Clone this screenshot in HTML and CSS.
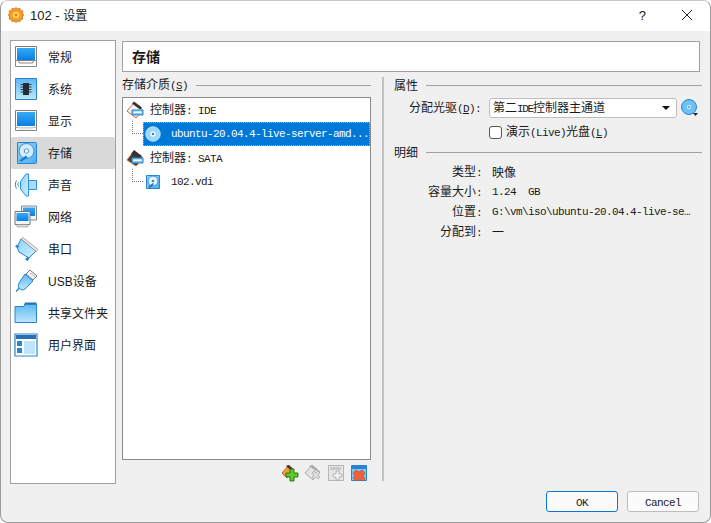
FILE: index.html
```html
<!DOCTYPE html>
<html lang="zh">
<head>
<meta charset="utf-8">
<title>102 - 设置</title>
<link rel="stylesheet" href="styles.css">
</head>
<body>
<svg class="defs" width="0" height="0"><defs>
  <linearGradient id="screen" x1="0" y1="0" x2="0" y2="1"><stop offset="0" stop-color="#35a9f6"/><stop offset="1" stop-color="#0a7fe6"/></linearGradient>
  <linearGradient id="pale" x1="0" y1="0" x2="0" y2="1"><stop offset="0" stop-color="#5cb9f3"/><stop offset="1" stop-color="#bfe7fc"/></linearGradient>
  <linearGradient id="paler" x1="0" y1="0" x2="1" y2="1"><stop offset="0" stop-color="#8ed3f9"/><stop offset="1" stop-color="#d2effd"/></linearGradient>
  <linearGradient id="hdd" x1="0" y1="0" x2="1" y2="1"><stop offset="0" stop-color="#9ad7f9"/><stop offset="1" stop-color="#4aaef0"/></linearGradient>
</defs></svg>
<div class="window">
  <header class="titlebar">
    <svg class="app-icon" width="16" height="16" viewBox="0 0 16 16"><path d="M8 0.500l1.700 1.300 2.100-.5 1 1.900 2 .8-.3 2.100 1.200 1.900-1.200 1.900.3 2.100-2 .8-1 1.900-2.100-.5L8 15.500l-1.700-1.300-2.100.5-1-1.900-2-.8.3-2.100L.3 8l1.200-1.900-.3-2.100 2-.8 1-1.900 2.100.5z" fill="#f59a23" stroke="#c9561a" stroke-width=".6"/><circle cx="8" cy="8" r="3.400" fill="#fbd15b"/><circle cx="8" cy="8" r="1.300" fill="#e9791f"/></svg>
    <span class="title-text"><span class="title-lat">102 - </span>设置</span>
    <span class="title-btn help">?</span>
    <svg class="title-close" width="12" height="12" viewBox="0 0 12 12"><path d="M1 1l10 10M11 1L1 11" stroke="#222" stroke-width="1" fill="none"/></svg>
  </header>
  <div class="main">
    <nav class="sidebar">
      <div class="nav-item"><svg class="nav-icon" viewBox="0 0 24 24"><path d="M1.500 1.500h21v14h-21z" fill="#fff" stroke="#7d7d7d"/><path d="M3 3h18v12H3z" fill="url(#screen)"/><path d="M1.500 15.500v6h21v-6h-3l-.7 2.500H5.200l-.7-2.500z" fill="#fff" stroke="#8a8a8a"/></svg><span>常规</span></div>
      <div class="nav-item"><svg class="nav-icon" viewBox="0 0 24 24"><path d="M1.500 1.500h21v21h-21z" fill="url(#pale)" stroke="#2a83cf"/><path d="M9 6h6v12H9z" fill="#262c33"/><path d="M6.500 7.500H9M6.500 10H9M6.500 12.500H9M6.500 15H9M15 7.500h2.500M15 10h2.500M15 12.500h2.500M15 15h2.500" stroke="#39424c" stroke-width="1"/></svg><span>系统</span></div>
      <div class="nav-item"><svg class="nav-icon" viewBox="0 0 24 24"><path d="M1.500 1.500h21v17h-21z" fill="#fff" stroke="#7d7d7d"/><path d="M3 3h18v14H3z" fill="url(#screen)"/><path d="M1.500 18.500v3h21v-3" fill="#fff" stroke="#8a8a8a"/><path d="M5 18.500h14v2H5z" fill="#e4e4e4"/></svg><span>显示</span></div>
      <div class="nav-item active"><svg class="nav-icon" viewBox="0 0 24 24"><path d="M3.500 1.500h18a1 1 0 0 1 1 1v19a1 1 0 0 1-1 1h-18z" fill="url(#hdd)" stroke="#2a83cf"/><circle cx="12.500" cy="10" r="7.500" fill="#d3edfc" stroke="#2f8fdc"/><circle cx="12.500" cy="10" r="2.200" fill="#fff" stroke="#3f9be0"/><path d="M5 19.500l7-5 1.800 2-6.800 4.500z" fill="#1f7fd0"/></svg><span>存储</span></div>
      <div class="nav-item"><svg class="nav-icon" viewBox="0 0 24 24"><path d="M2.500 7.500C1 10 1 13 2.500 15.500M4.500 9.500c-.7 1.200-.7 2.800 0 4" stroke="#2f7fc8" stroke-width="1" fill="none"/><path d="M6.500 8.500L12 1h2.500v22H12l-5.500-7z" fill="url(#paler)" stroke="#2f8fdc"/><path d="M14.500 7.500h8v9h-8z" fill="#a9dcfa" stroke="#2f8fdc"/></svg><span>声音</span></div>
      <div class="nav-item"><svg class="nav-icon" viewBox="0 0 24 24"><path d="M7.500 1h15v14h-15z" fill="#f4f4f4" stroke="#888"/><path d="M9 2.500h12V11H9z" fill="url(#screen)"/><path d="M1 6.500h15v13H1z" fill="#f4f4f4" stroke="#777"/><path d="M2.500 8h12v8h-12z" fill="url(#screen)"/><path d="M3 19.500h11v2.500H3z" fill="#d8d8d8" stroke="#888" stroke-width=".5"/></svg><span>网络</span></div>
      <div class="nav-item"><svg class="nav-icon" viewBox="0 0 24 24"><path d="M7 2l15 12-7 7-10-6-2-5z" fill="url(#paler)" stroke="#2a83cf"/><path d="M9 .5l15 12-1.800 2L7 2z" fill="#eaeaea" stroke="#8a8a8a" stroke-width=".7"/><path d="M1 9.500l2.500 1.500 2-1.500-2.500-2zM11 22l2 2 2.500-2-1.500-2.500z" fill="#2a83cf"/></svg><span>串口</span></div>
      <div class="nav-item"><svg class="nav-icon" viewBox="0 0 24 24"><path d="M16 1l7 6-4 4-7-6z" fill="#f4f4f4" stroke="#777"/><path d="M17 4.500l1 1M19.500 6.500l1 1" stroke="#555"/><path d="M11 5l8 7-8 8c-2 1.500-4 1-5.500-.5S4 16 5 14z" fill="url(#pale)" stroke="#2a83cf"/><path d="M5.500 19l-3.500 3.500" stroke="#2a83cf" stroke-width="1.500"/></svg><span><span class="lat-sans">USB</span>设备</span></div>
      <div class="nav-item"><svg class="nav-icon" viewBox="0 0 24 24"><path d="M11 1.500h11.500v5H9z" fill="#2a6fb5"/><path d="M1 5.500h8.500l2-2h11v18H1z" fill="url(#pale)" stroke="#2a83cf"/></svg><span>共享文件夹</span></div>
      <div class="nav-item"><svg class="nav-icon" viewBox="0 0 24 24"><path d="M1 1h22v22H1z" fill="#fff" stroke="#2a83cf" stroke-width="1.200"/><path d="M2 2h20v4H2z" fill="#2a6fb5"/><path d="M3 8h5v5H3zM3 15h5v5H3z" fill="#2a83cf"/><path d="M10 8h11v13H10z" fill="#bde6fb"/></svg><span>用户界面</span></div>
    </nav>
    <section class="content">
      <h1 class="page-title">存储</h1>
      <div class="panes">
        <div class="left-pane">
          <div class="group-label"><span>存储介质<span class="lat">(<u>S</u>)</span></span></div>
          <div class="tree">
            <div class="tree-row">
              <svg class="row-icon" viewBox="0 0 18 18"><path d="M1 10l7-8 9 7-7 8z" fill="#f2f2f2" stroke="#d9662a"/><path d="M6 2.500l2-2 8 6-2 2z" fill="#333"/><path d="M6 9h11v5H6z" fill="#7cc8f7" stroke="#2a83cf"/><path d="M7.500 10.500h8v1.500h-8z" fill="#fff"/></svg>
              <span>控制器<span class="lat">: IDE</span></span>
            </div>
            <div class="tree-row child selected">
              <span class="branch"></span>
              <div class="sel-box">
                <svg class="row-icon" viewBox="0 0 16 16"><circle cx="8" cy="8" r="7.300" fill="#9bd8fa" stroke="#c9ebfd" stroke-width=".8"/><circle cx="8" cy="8" r="2.600" fill="#fff"/><circle cx="8" cy="8" r="1.300" fill="#2a83cf"/></svg>
                <span class="lat">ubuntu-20.04.4-live-server-amd...</span>
              </div>
            </div>
            <div class="tree-row">
              <svg class="row-icon" viewBox="0 0 18 18"><path d="M1 11l7-9 9 7-7 8z" fill="#3d3d3d" stroke="#d9662a"/><path d="M5 5l3-4 8 6-3 2z" fill="#333"/><path d="M6 9h11v5H6z" fill="#7cc8f7" stroke="#2a83cf"/><path d="M7.500 10.500h8v1.500h-8z" fill="#fff"/></svg>
              <span>控制器<span class="lat">: SATA</span></span>
            </div>
            <div class="tree-row child">
              <span class="branch"></span>
              <div class="plain-box">
                <svg class="row-icon" viewBox="0 0 16 16"><path d="M1.500 1.500h13v13h-13z" fill="url(#hdd)" stroke="#2a83cf"/><circle cx="8" cy="7" r="5" fill="#e3f4fe" stroke="#3a8fd6"/><circle cx="8" cy="7" r="1.300" fill="#3a8fd6"/><path d="M3 13l5-4 1 1-4 4z" fill="#2a6fb5"/></svg>
                <span class="lat">102.vdi</span>
              </div>
            </div>
          </div>
          <div class="tree-tools">
            <svg class="tool" viewBox="0 0 18 18"><path d="M1 9l7-8 4 4-6 9z" fill="#f0a030" stroke="#b5461a" stroke-width=".8"/><path d="M5 2l2-1 5 4-1 2z" fill="#333"/><path d="M9 5h4v4h4v4h-4v4H9v-4H5V9h4z" fill="#5fc82a" stroke="#2a7a14"/></svg>
            <svg class="tool" viewBox="0 0 18 18"><path d="M1 9l7-8 8 7-7 8z" fill="#e4e4e4" stroke="#aaa"/><path d="M5 2l3-1 6 5-2 1z" fill="#aaa"/><path d="M10 7l2 2 2-2 2 2-2 2 2 2-2 2-2-2-2 2-2-2 2-2-2-2z" fill="#ddd" stroke="#aaa" stroke-width=".8"/></svg>
            <svg class="tool" viewBox="0 0 18 18"><path d="M1.500 1.500h15v15h-15z" fill="#e6e6e6" stroke="#b5b5b5"/><path d="M3 3h11v3H3z" fill="#c9c9c9"/><path d="M9 7h3v3h3v3h-3v3H9v-3H6v-3h3z" fill="#f2f2f2" stroke="#aaa" stroke-width=".8"/></svg>
            <svg class="tool" viewBox="0 0 18 18"><path d="M1.500 1.500h15v15h-15z" fill="#7cc8f7" stroke="#2a83cf"/><path d="M2 2h14v3H2z" fill="#2a83cf"/><path d="M6 6l3 2 3-2 3 3-2 3 2 3-2 2-4-2-3 2-3-3 2-2-2-3z" fill="#f0603a" stroke="#c9401a" stroke-width=".6"/></svg>
          </div>
        </div>
        <div class="right-pane">
          <div class="group-label"><span>属性</span></div>
          <div class="form-row">
            <label class="field-label">分配光驱<span class="lat">(<u>D</u>):</span></label>
            <div class="combo"><span>第二<span class="lat tight">IDE</span>控制器主通道</span><i class="combo-arrow"></i></div>
            <svg class="disc-btn" width="18" height="18" viewBox="0 0 18 18"><circle cx="8" cy="8" r="7.500" fill="#6ec1f5" stroke="#2a83cf"/><circle cx="8" cy="8" r="2" fill="#e3f4fe"/><circle cx="8" cy="8" r=".9" fill="#2a83cf"/><path d="M12 14h5l-2.500 3z" fill="#222"/></svg>
          </div>
          <div class="check-row"><span class="check"></span><span>演示<span class="lat">(Live)</span>光盘<span class="lat">(<u>L</u>)</span></span></div>
          <div class="group-label details"><span>明细</span></div>
          <dl class="details-grid">
            <dt>类型<span class="lat">:</span></dt><dd>映像</dd>
            <dt>容量大小<span class="lat">:</span></dt><dd class="lat">1.24&nbsp;&nbsp;GB</dd>
            <dt>位置<span class="lat">:</span></dt><dd class="lat">G:\vm\iso\ubuntu-20.04.4-live-se…</dd>
            <dt>分配到<span class="lat">:</span></dt><dd>一</dd>
          </dl>
        </div>
      </div>
    </section>
  </div>
  <footer class="buttons">
    <button class="btn primary"><span class="lat">OK</span></button>
    <button class="btn"><span class="lat">Cancel</span></button>
  </footer>
</div>
</body>
</html>
```
FILE: styles.css
```css
* { box-sizing: border-box; }
html, body { margin: 0; padding: 0; background: #fff; }
body { width: 711px; height: 523px; overflow: hidden; font: 12px/16px "Noto Sans CJK SC", sans-serif; color: #1a1a1a; }
.defs { display: block; height: 0; }
.lat { font-family: "Liberation Mono", monospace; font-size: 11px; letter-spacing: -0.6px; }
.lat-sans { font-family: "Liberation Sans", sans-serif; }
.title-lat { font: 13px "Liberation Sans", sans-serif; }
.window { width: 711px; height: 523px; background: #f0f0f0; border: 1px solid #9a9a9a; border-top-color: #c8c8c8; border-radius: 8px; overflow: hidden; display: flex; flex-direction: column; }
.titlebar { height: 30px; flex: none; background: #fff; display: flex; align-items: center; padding-left: 7px; padding-bottom: 2px; }
.app-icon { flex: none; }
.title-text { margin-left: 6px; flex: 1; }
.title-btn.help { font: 13px "Liberation Sans", sans-serif; margin-right: 35px; }
.title-close { margin-right: 17px; }
.main { display: flex; flex: 1; min-height: 0; padding: 9px 10px 0 9px; gap: 6px; }
.sidebar { width: 106px; height: 444px; flex: none; background: #fff; border: 1px solid #a0a0a0; display: flex; flex-direction: column; }
.nav-item { height: 32px; display: flex; align-items: center; padding-left: 3px; gap: 10px; flex: none; border-radius: 2px; }
.nav-item.active { background: #d9d9d9; }
.nav-icon { width: 24px; height: 24px; flex: none; }
.content { flex: 1; min-width: 0; display: flex; flex-direction: column; }
.page-title { margin: 1px 0 0; height: 31px; background: #fff; border: 1px solid #a0a0a0; font-size: 14px; font-weight: 700; line-height: 29px; padding-left: 9px; flex: none; }
.panes { display: flex; flex: 1; min-height: 0; padding-top: 5px; }
.left-pane { width: 249px; flex: none; display: flex; flex-direction: column; }
.group-label { display: flex; align-items: center; gap: 8px; height: 16px; white-space: nowrap; }
.group-label::after { content: ""; flex: 1; height: 1px; background: #a0a0a0; }
.tree { margin-top: 4px; height: 363px; background: #fff; border: 1px solid #8a8a8a; flex: none; }
.tree-row { height: 24px; display: flex; align-items: center; padding-left: 3px; gap: 6px; }
.tree-row .row-icon { width: 18px; height: 18px; flex: none; }
.tree-row.child { padding-left: 9px; gap: 0; }
.branch { width: 11px; height: 13px; margin-top: -13px; border-left: 1px dotted #777; border-bottom: 1px dotted #777; flex: none; }
.sel-box, .plain-box { flex: 1; height: 24px; display: flex; align-items: center; padding-left: 2px; gap: 10px; white-space: nowrap; overflow: hidden; }
.sel-box .row-icon, .plain-box .row-icon { width: 16px; height: 16px; }
.sel-box { background: #0078d7; color: #fff; outline: 1px dotted #f7a33a; outline-offset: -1px; }
.tree-tools { display: flex; justify-content: flex-end; gap: 5px; padding: 4px 3px 0 0; }
.tool { width: 18px; height: 18px; flex: none; }
.right-pane { flex: 1; min-width: 0; margin-left: 11px; border-left: 2px solid #c2c2c2; padding-left: 10px; margin-right: -2px; height: 404px; }
.form-row { display: flex; align-items: center; margin-top: 5px; height: 20px; }
.field-label { width: 87px; margin-right: 7px; text-align: right; flex: none; white-space: nowrap; }
.combo { width: 188px; height: 20px; margin-left: 1px; background: #fff; border: 1px solid #bdbdbd; border-radius: 3px; padding-left: 3px; display: flex; align-items: center; justify-content: space-between; padding-right: 6px; line-height: 18px; }
.tight { letter-spacing: -1.300px; }
.combo-arrow { width: 0; height: 0; border: 4px solid transparent; border-top: 4px solid #111; border-bottom: 0; }
.disc-btn { margin-left: 4px; flex: none; }
.check-row { display: flex; align-items: center; gap: 4px; height: 18px; margin: 5px 0 0 95px; white-space: nowrap; }
.check { width: 13px; height: 13px; background: #fff; border: 1px solid #555; border-radius: 3px; flex: none; }
.group-label.details { margin-top: 3px; }
.details-grid { display: grid; grid-template-columns: 88px 1fr; grid-auto-rows: 20px; margin: 2px 0 0; align-items: center; }
.details-grid dt { text-align: right; white-space: nowrap; }
.details-grid dd { margin: 0 0 0 10px; white-space: nowrap; }
.buttons { display: flex; justify-content: flex-end; gap: 9px; padding: 0 11px 10px 0; margin-top: auto; }
.btn { width: 72px; height: 21px; background: #fbfbfb; border: 1px solid #bdbdbd; border-radius: 3px; padding: 0; color: #1a1a1a; font: inherit; line-height: 17px; }
.btn.primary { border-color: #0a78d4; }
```
